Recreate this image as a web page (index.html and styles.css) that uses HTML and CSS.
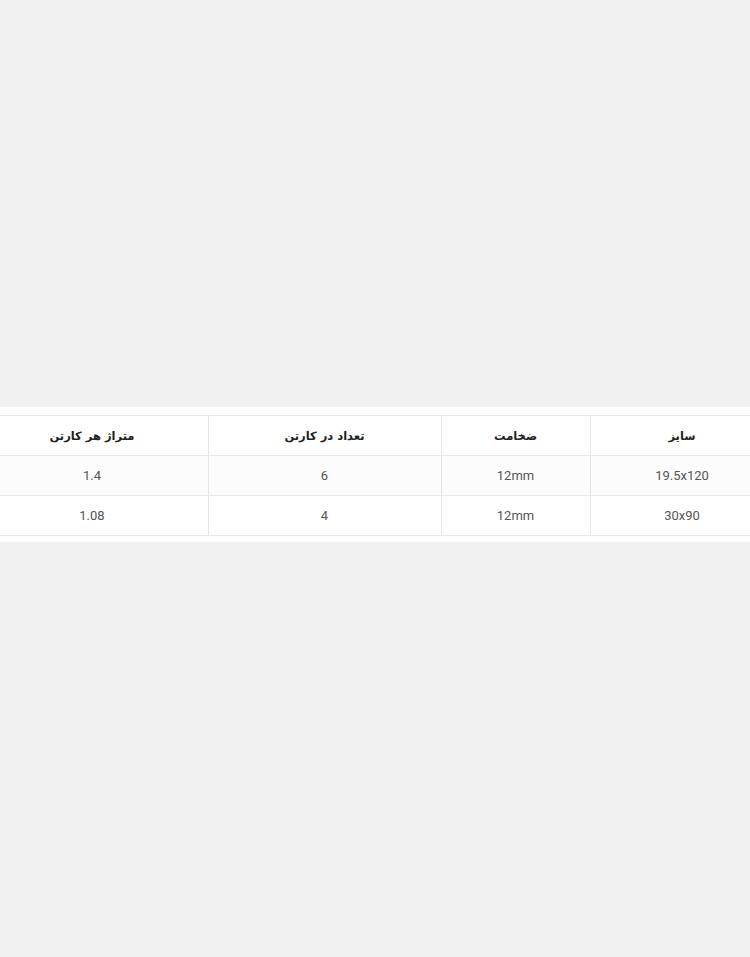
FILE: index.html
```html
<!DOCTYPE html>
<html lang="fa" dir="rtl">
<head>
<meta charset="utf-8">
<link rel="stylesheet" href="styles.css">
</head>
<body>
<div class="page">
  <div class="top-space"></div>
  <section class="panel">
    <div class="table-wrap">
      <table class="spec">
        <colgroup>
          <col class="c-size">
          <col class="c-thick">
          <col class="c-count">
          <col class="c-area">
        </colgroup>
        <thead>
          <tr>
            <th>سایز</th>
            <th>ضخامت</th>
            <th>تعداد در کارتن</th>
            <th>متراژ هر کارتن</th>
          </tr>
        </thead>
        <tbody>
          <tr>
            <td>19.5x120</td>
            <td>12mm</td>
            <td>6</td>
            <td>1.4</td>
          </tr>
          <tr>
            <td>30x90</td>
            <td>12mm</td>
            <td>4</td>
            <td>1.08</td>
          </tr>
        </tbody>
      </table>
    </div>
  </section>
</div>
</body>
</html>
```

FILE: styles.css
```css
html, body {
  margin: 0;
  padding: 0;
  background: #f1f1f1;
  overflow: hidden;
}

body {
  width: 750px;
  height: 957px;
  font-family: Roboto, "DejaVu Sans", sans-serif;
}

.page {
  display: flex;
  flex-direction: column;
}

.top-space {
  height: 407px;
}

.panel {
  background: #ffffff;
  padding: 8px 0 6px;
}

.table-wrap {
  display: flex;
  justify-content: center;
}

.spec {
  flex: none;
  width: 798px;
  table-layout: fixed;
  border-collapse: collapse;
  direction: rtl;
  font-size: 13px;
}

.c-size { width: 184px; }
.c-thick { width: 149px; }
.c-count { width: 233px; }
.c-area { width: 232px; }

.spec th,
.spec td {
  height: 39px;
  padding: 0 8px;
  text-align: center;
  vertical-align: middle;
  border: 1px solid #e6e6e6;
}

.spec th {
  font-family: "DejaVu Sans", sans-serif;
  font-weight: bold;
  font-size: 11.5px;
  color: #222;
  background: #fff;
}

.spec td {
  color: #555;
  background: #fff;
}

.spec tbody tr:nth-child(odd) td {
  background: #fcfcfc;
}
```
